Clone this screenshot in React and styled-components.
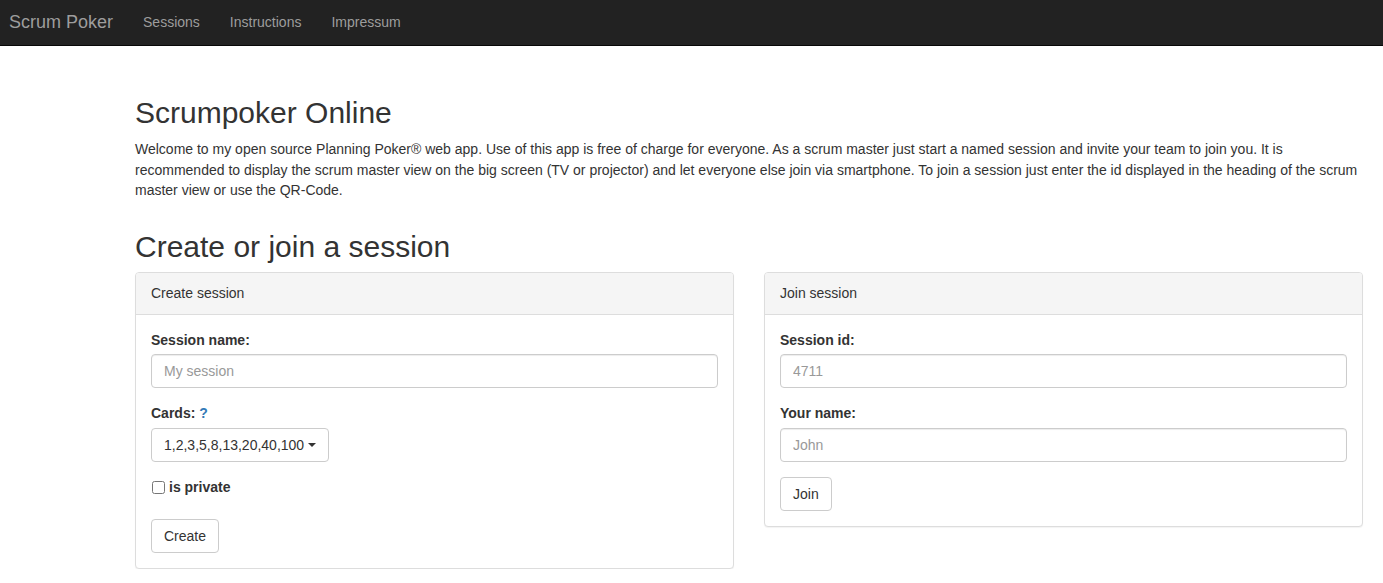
import React from 'react';
import styled, { createGlobalStyle } from 'styled-components';

const GlobalStyle = createGlobalStyle`
  * {
    box-sizing: border-box;
  }
  body {
    margin: 0;
    font-family: "Liberation Sans", Arial, sans-serif;
    font-size: 14px;
    line-height: 1.42857;
    color: #333;
    background: #fff;
  }
`;

const Navbar = styled.nav`
  display: flex;
  align-items: center;
  height: 46px;
  padding-bottom: 2px;
  background: #222;
  border-bottom: 1px solid #080808;
`;

const Brand = styled.a`
  padding: 0 15px 0 9px;
  font-size: 18px;
  line-height: 20px;
  color: #9d9d9d;
  text-decoration: none;
`;

const NavLink = styled.a`
  padding: 0 15px;
  font-size: 14px;
  line-height: 20px;
  color: #9d9d9d;
  text-decoration: none;
`;

const Main = styled.main`
  padding: 30px 20px 0 135px;
`;

// Both page titles share the h1 look; top/bottom margins vary per use
const Heading = styled.h1`
  margin: ${(p) => (p.$top ? p.$top : 20)}px 0 ${(p) => (p.$bottom ? p.$bottom : 10)}px;
  font-size: 30px;
  font-weight: 500;
  line-height: 1.1;
`;

const Intro = styled.p`
  margin: 0;
  line-height: 20.5px;
`;

const Columns = styled.div`
  display: grid;
  grid-template-columns: 1fr 1fr;
  gap: 30px;
  align-items: start;
`;

const Panel = styled.section`
  border: 1px solid #ddd;
  border-radius: 4px;
  background: #fff;
  box-shadow: 0 1px 1px rgba(0, 0, 0, 0.05);
`;

const PanelHeading = styled.div`
  padding: 10px 15px 11px;
  background: #f5f5f5;
  border-bottom: 1px solid #ddd;
  border-radius: 3px 3px 0 0;
  line-height: 20px;
`;

const PanelBody = styled.div`
  padding: 15px;
`;

const FormGroup = styled.div`
  margin-bottom: ${(p) => (p.$gap ? p.$gap : 15)}px;
`;

const Label = styled.label`
  display: block;
  padding-top: 1px;
  margin-bottom: 4px;
  font-weight: bold;
`;

const Help = styled.a`
  color: #337ab7;
  text-decoration: none;
`;

const Input = styled.input`
  display: block;
  width: 100%;
  height: 34px;
  padding: 6px 12px;
  font-family: inherit;
  font-size: 14px;
  color: #555;
  background: #fff;
  border: 1px solid #ccc;
  border-radius: 4px;
  box-shadow: inset 0 1px 1px rgba(0, 0, 0, 0.075);
  outline: none;

  &::placeholder {
    color: #999;
  }
`;

const Button = styled.button`
  display: inline-flex;
  align-items: center;
  height: 34px;
  padding: 6px 12px;
  font-family: inherit;
  font-size: 14px;
  line-height: 20px;
  color: #333;
  background: #fff;
  border: 1px solid #ccc;
  border-radius: 4px;
  cursor: pointer;
`;

const Caret = styled.span`
  display: inline-block;
  width: 0;
  height: 0;
  margin-left: 4px;
  border-top: 4px solid #333;
  border-left: 4px solid transparent;
  border-right: 4px solid transparent;
`;

const CheckLabel = styled.label`
  display: flex;
  align-items: center;
  font-weight: bold;
  line-height: 20px;
  margin-top: 3px;

  input {
    width: 13px;
    height: 13px;
    margin: 0 4px 0 1px;
  }
`;

const App = () => {
  return (
    <>
      <GlobalStyle />
      <Navbar>
        <Brand href="#">Scrum Poker</Brand>
        <NavLink href="#">Sessions</NavLink>
        <NavLink href="#">Instructions</NavLink>
        <NavLink href="#">Impressum</NavLink>
      </Navbar>
      <Main>
        <Heading>Scrumpoker Online</Heading>
        <Intro>
          Welcome to my open source Planning Poker® web app. Use of this app is free of charge for
          everyone. As a scrum master just start a named session and invite your team to join you.
          It is recommended to display the scrum master view on the big screen (TV or projector) and
          let everyone else join via smartphone. To join a session just enter the id displayed in
          the heading of the scrum master view or use the QR-Code.
        </Intro>
        <Heading as="h2" $top={29} $bottom={9}>
          Create or join a session
        </Heading>
        <Columns>
          <Panel>
            <PanelHeading>Create session</PanelHeading>
            <PanelBody>
              <FormGroup>
                <Label>Session name:</Label>
                <Input placeholder="My session" />
              </FormGroup>
              <FormGroup>
                <Label>
                  Cards: <Help href="#">?</Help>
                </Label>
                <Button type="button">
                  1,2,3,5,8,13,20,40,100
                  <Caret />
                </Button>
              </FormGroup>
              <FormGroup $gap={22}>
                <CheckLabel>
                  <input type="checkbox" />
                  is private
                </CheckLabel>
              </FormGroup>
              <Button type="button">Create</Button>
            </PanelBody>
          </Panel>
          <Panel>
            <PanelHeading>Join session</PanelHeading>
            <PanelBody>
              <FormGroup>
                <Label>Session id:</Label>
                <Input placeholder="4711" />
              </FormGroup>
              <FormGroup>
                <Label>Your name:</Label>
                <Input placeholder="John" />
              </FormGroup>
              <Button type="button">Join</Button>
            </PanelBody>
          </Panel>
        </Columns>
      </Main>
    </>
  );
};

export default App;
